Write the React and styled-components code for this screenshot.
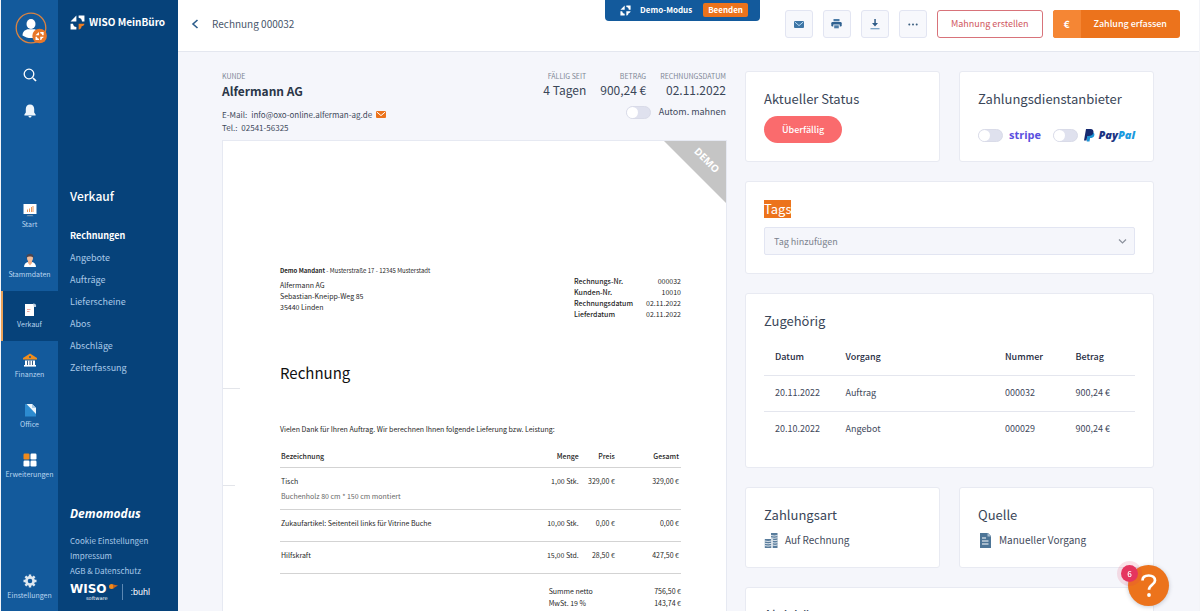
import React from "react";
import styled, { createGlobalStyle, css } from "styled-components";

const GlobalStyle = createGlobalStyle`
  *, *::before, *::after { box-sizing: border-box; }
  html, body { margin: 0; background: #fff; }
  body, button, input, select {
    font-family: "Noto Sans CJK SC", "Noto Sans", sans-serif;
  }
  body { font-size: 10px; line-height: 14px; color: #3f4a5c; }
  h1, h2, h3, p, ul, dl, dd { margin: 0; padding: 0; }
  ul { list-style: none; }
  a { color: inherit; text-decoration: none; }
  svg { display: block; flex: none; }
`;

/* ---------- shell ---------- */

const Shell = styled.div`
  display: grid;
  grid-template-columns: 57px 120px minmax(0, 1fr);
  grid-template-rows: minmax(0, 1fr);
  height: 100vh;
  overflow: hidden;
  border: solid #f3f4f8;
  border-width: 0 1px;
`;

const Rail = styled.nav`
  display: flex;
  flex-direction: column;
  align-items: stretch;
  background: #135a9c;
  color: #b9d6f0;
`;

const RailTop = styled.div`
  display: flex;
  flex-direction: column;
  align-items: center;
  gap: 22px;
  height: 191px;
  padding-top: 12px;
`;

const PlainButton = styled.button`
  display: block;
  padding: 0;
  border: 0;
  background: none;
  color: inherit;
  cursor: pointer;
`;

const RailLink = styled.a`
  display: flex;
  flex-direction: column;
  align-items: center;
  gap: 2px;
  height: 50px;
  padding-top: 12px;
  font-size: 7px;
  line-height: 10px;
  ${(p) =>
    p.$active &&
    css`
      background: #06427a;
      border-left: 2px solid #e9a25b;
      padding-right: 2px;
    `}
`;

const RailBottom = styled.div`
  margin-top: auto;
  padding-bottom: 5px;
  a { height: 44px; }
`;

const Sub = styled.aside`
  display: flex;
  flex-direction: column;
  padding: 13px 10px 11px 12px;
  background: #06427a;
  color: #a9c9e8;
`;

const Brand = styled.a`
  display: flex;
  align-items: center;
  gap: 4px;
  height: 18px;
  color: #fff;
  font-size: 10px;
  line-height: 18px;
  font-weight: 700;
  white-space: nowrap;
`;

const SubTitle = styled.h2`
  margin-top: 156px;
  font-size: 12px;
  line-height: 18px;
  font-weight: 500;
  color: #fff;
`;

const SubList = styled.ul`
  margin-top: 20px;
  font-size: 9px;
  line-height: 22px;
`;

const SubLink = styled.a`
  ${(p) => p.$active && "color: #fff; font-weight: 700;"}
`;

const SubFooter = styled.div`
  margin-top: auto;
`;

const DemoLabel = styled.p`
  margin-bottom: 10px;
  font: italic 700 12px/18px "Open Sans", sans-serif;
  color: #fff;
`;

const FooterList = styled.ul`
  font-size: 8px;
  line-height: 15px;
`;

const Logos = styled.div`
  display: flex;
  align-items: center;
  gap: 2px;
  margin-top: 6px;
  height: 16px;
  color: #fff;
`;

const WisoMark = styled.span`
  font: 700 12px/12px "DejaVu Sans", sans-serif;
  small {
    display: block;
    padding-left: 16px;
    font-size: 5px;
    line-height: 6px;
    font-weight: 400;
  }
`;

const Buhl = styled.span`
  margin-left: 2px;
  padding-left: 7px;
  border-left: 1px solid #5c88b3;
  font: 400 9px/16px "Liberation Sans", sans-serif;
`;

const Main = styled.main`
  display: flex;
  flex-direction: column;
  min-width: 0;
  background: #f5f6fb;
`;

/* ---------- header ---------- */

const Header = styled.header`
  position: relative;
  display: flex;
  flex: none;
  align-items: center;
  height: 52px;
  padding: 0 19px 3px 13px;
  background: #fff;
  border-bottom: 1px solid #e4e7ef;
`;

const PageTitle = styled.h1`
  margin-left: 12px;
  font-size: 10px;
  line-height: 16px;
  font-weight: 400;
  color: #48566b;
`;

const Actions = styled.div`
  display: flex;
  gap: 10px;
  margin-left: auto;
`;

const IconButton = styled.button`
  display: grid;
  place-items: center;
  width: 28px;
  height: 28px;
  padding: 0;
  border: 1px solid #e2e5f2;
  border-radius: 3px;
  background: #f7f8fc;
  color: #3c6c98;
`;

const OutlineButton = styled.button`
  height: 28px;
  padding: 0 13px;
  border: 1px solid #d8737a;
  border-radius: 3px;
  background: #fff;
  color: #cf565e;
  font-size: 9px;
  line-height: 14px;
`;

const PrimaryButton = styled.button`
  display: flex;
  height: 28px;
  padding: 0;
  overflow: hidden;
  border: 0;
  border-radius: 3px;
  background: #ec731c;
  color: #fff;
  font-size: 9px;
  line-height: 28px;
  font-weight: 500;
`;

const Euro = styled.span`
  width: 28px;
  background: #f58634;
  font-weight: 700;
  font-size: 10px;
`;

const ButtonText = styled.span`
  padding: 0 13px;
`;

const DemoBanner = styled.div`
  position: absolute;
  top: 0;
  right: 43%;
  display: flex;
  align-items: center;
  height: 21px;
  padding: 0 12px 1px 15px;
  border-radius: 0 0 4px 4px;
  background: #135a9c;
  color: #fff;
  font-size: 8px;
  font-weight: 700;
  white-space: nowrap;
`;

const DemoText = styled.span`
  margin: 0 11px 0 9px;
`;

const EndButton = styled.button`
  height: 14px;
  padding: 0 5px;
  border: 0;
  border-radius: 2px;
  background: #ec731c;
  color: #fff;
  font-size: 8px;
  line-height: 14px;
  font-weight: 700;
`;

/* ---------- content ---------- */

const Content = styled.div`
  display: grid;
  grid-template-columns: minmax(0, 1fr) 409px;
  gap: 18px;
  flex: 1;
  min-height: 0;
  overflow: hidden;
  padding: 19px 45px 0 44px;
`;

const Document = styled.section`
  display: flex;
  flex-direction: column;
  min-width: 0;
`;

const DocHead = styled.div`
  display: flex;
  justify-content: space-between;
  height: 69px;
  padding-right: 1px;
`;

const Label = styled.p`
  font-size: 7px;
  line-height: 10px;
  color: #7e8795;
  text-transform: uppercase;
`;

const CustomerName = styled.h2`
  font-size: 12px;
  line-height: 20px;
  font-weight: 700;
  color: #2b3648;
`;

const Contact = styled.div`
  margin-top: 7px;
  font-size: 8px;
  line-height: 13px;
  p { display: flex; align-items: center; gap: 4px; }
`;

const Stats = styled.div`
  display: flex;
  justify-content: flex-end;
  gap: 14px;
  text-align: right;
`;

const StatValue = styled.p`
  font-size: 12px;
  line-height: 18px;
  color: #3a4658;
`;

const RemindRow = styled.label`
  display: flex;
  align-items: center;
  justify-content: flex-end;
  gap: 8px;
  margin-top: 6px;
  font-size: 9px;
  line-height: 14px;
`;

const Toggle = styled.input.attrs({ type: "checkbox", role: "switch" })`
  appearance: none;
  flex: none;
  width: 25px;
  height: 13px;
  margin: 0;
  border: 1px solid #d9dbe8;
  border-radius: 7px;
  background: #dfe1ee;
  &::before {
    content: "";
    display: block;
    width: 11px;
    height: 11px;
    border-radius: 50%;
    background: #fff;
  }
  &:checked::before { margin-left: auto; }
`;

const Paper = styled.article`
  position: relative;
  flex: 1;
  padding: 124px 45px 0 57px;
  border: 1px solid #e6e9f2;
  border-bottom: 0;
  background: #fff;
  color: #1f1f1f;
  font-size: 7px;
  line-height: 11px;
`;

const Ribbon = styled.div`
  position: absolute;
  top: 0;
  right: 0;
  width: 62px;
  height: 62px;
  overflow: hidden;
  background: #c5c5c5;
  clip-path: polygon(0 0, 100% 0, 100% 100%);
  span {
    position: absolute;
    top: 12px;
    right: 4px;
    color: #fff;
    font: 700 10px/14px "Open Sans", sans-serif;
    transform: rotate(45deg);
  }
`;

const FoldMark = styled.i`
  position: absolute;
  left: 0;
  top: ${(p) => p.$top}px;
  width: ${(p) => p.$width}px;
  height: 1px;
  background: #e3e5ea;
`;

const AddressRow = styled.div`
  display: flex;
  justify-content: space-between;
`;

const Sender = styled.p`
  margin-bottom: 3px;
  font-size: 6px;
  line-height: 12px;
`;

const InvoiceInfo = styled.table`
  margin-top: 11px;
  border-collapse: collapse;
  th, td { padding: 0; line-height: 11px; }
  th { text-align: left; font-weight: 500; }
  td { text-align: right; padding-left: 13px; }
`;

const InvoiceTitle = styled.h2`
  margin-top: 41px;
  font-size: 15px;
  line-height: 24px;
  font-weight: 400;
  color: #111;
`;

const Intro = styled.p`
  margin-top: 39px;
`;

const Items = styled.table`
  width: 100%;
  margin-top: 8px;
  border-collapse: collapse;
  line-height: 11px;
  th, td {
    padding: 8px 2px 8px 1px;
    vertical-align: top;
    text-align: right;
    white-space: nowrap;
  }
  th { padding-bottom: 5px; font-weight: 500; }
  th:first-child, td:first-child { text-align: left; }
  th:nth-child(3), td:nth-child(3) { width: 9%; }
  th:last-child, td:last-child { width: 16%; }
  tr { border-bottom: 1px solid #d3d3d3; }
  tbody tr { height: 32px; }
  small { display: block; margin-top: 5px; font-size: 7px; line-height: 9px; color: #666; }
`;

const Totals = styled.dl`
  display: grid;
  grid-template-columns: auto auto;
  justify-content: space-between;
  width: 33%;
  margin: 11px 0 0 auto;
  line-height: 12px;
  dd { text-align: right; }
`;

/* ---------- cards ---------- */

const Cards = styled.section`
  display: grid;
  grid-template-columns: 1fr 1fr;
  align-content: start;
  gap: 19px;
`;

const Card = styled.section`
  grid-column: ${(p) => (p.$wide ? "1 / -1" : "auto")};
  min-height: ${(p) => p.$min}px;
  padding: 17px 18px;
  border: 1px solid #e8eaf2;
  border-radius: 3px;
  background: #fff;
`;

const CardTitle = styled.h3`
  font-size: 13px;
  line-height: 20px;
  font-weight: 400;
  color: #3a4658;
`;

const Marked = styled.mark`
  display: inline-block;
  background: #ec731c;
  color: #fff;
  line-height: 18px;
`;

const StatusPill = styled.span`
  display: inline-block;
  margin-top: 7px;
  padding: 0 18px;
  border-radius: 14px;
  background: #fa6b6d;
  color: #fff;
  font-size: 9px;
  line-height: 27px;
  font-weight: 500;
`;

const Providers = styled.div`
  display: flex;
  justify-content: space-between;
  margin-top: 18px;
`;

const Provider = styled.label`
  display: flex;
  align-items: center;
  gap: 6px;
  height: 16px;
`;

const StripeName = styled.span`
  font: 700 11px/16px "Open Sans", sans-serif;
  color: #5a4fe0;
`;

const PayPalName = styled.span`
  display: flex;
  align-items: center;
  gap: 3px;
  font: italic 800 11px/16px "Open Sans", sans-serif;
  color: #1b3382;
  em { color: #1a9ade; }
`;

const SelectWrap = styled.div`
  position: relative;
  margin-top: 8px;
  color: #8b919c;
  svg { position: absolute; right: 8px; top: 11px; pointer-events: none; }
`;

const TagSelect = styled.select`
  appearance: none;
  display: block;
  width: 100%;
  height: 28px;
  padding: 0 9px;
  border: 1px solid #e2e5f2;
  border-radius: 2px;
  background: #f5f6fb;
  color: #7b828e;
  font-size: 9px;
`;

const Related = styled.table`
  width: 100%;
  margin-top: 9px;
  border-collapse: collapse;
  table-layout: fixed;
  font-size: 9px;
  line-height: 14px;
  th, td { padding: 10px 0 11px 11px; text-align: left; font-weight: 400; white-space: nowrap; }
  th { font-weight: 500; color: #1f2c42; }
  tr + tr, tbody tr { border-top: 1px solid #e4e6ee; }
`;

const InfoLine = styled.p`
  display: flex;
  align-items: center;
  gap: 6px;
  margin-top: 7px;
  font-size: 10px;
  line-height: 16px;
`;

const HelpButton = styled.button`
  position: fixed;
  right: 31px;
  bottom: 5px;
  display: grid;
  place-items: center;
  width: 41px;
  height: 41px;
  padding: 0;
  border: 0;
  border-radius: 50%;
  background: #ec731c;
  box-shadow: 0 1px 4px rgba(40, 50, 80, 0.25);
`;

const Badge = styled.span`
  position: absolute;
  top: 0;
  left: -7px;
  width: 17px;
  height: 17px;
  border-radius: 50%;
  background: #e5355f;
  box-shadow: 0 0 0 4px rgba(229, 53, 95, 0.14);
  color: #fff;
  font-size: 8px;
  line-height: 17px;
  font-weight: 500;
`;

/* ---------- drawings ---------- */

const PinWheel = ({ size, accent = "#fff" }) => (
  <svg width={size} height={size} viewBox="0 0 16 16" aria-hidden="true">
    <path d="M6.800.6v6.200H.6z" fill="#fff" />
    <path d="M9.200.6h6.200v6.200h-2.600C12.600 4.600 11.400 3.300 9.200 3z" fill="#fff" />
    <path d="M.6 9.200h2.600c.3 2.200 1.500 3.400 3.600 3.700v2.500H.6z" fill="#fff" />
    <path d="M9.200 9.200h6.200c-.2 1.700-1.300 2.500-3 2.700-.2 1.900-1.200 3.200-3.200 3.500z" fill={accent} />
  </svg>
);

const Avatar = () => (
  <svg width="34" height="34" viewBox="0 0 34 34" aria-hidden="true">
    <circle cx="18" cy="16" r="14.800" fill="none" stroke="#d98341" strokeWidth="1.300" />
    <ellipse cx="18" cy="12" rx="4.500" ry="5" fill="#fff" />
    <path d="M9.500 23.500c0-4 3-6.200 6-6.200h5c3 0 6 2.200 6 6.200-5 3.400-12 3.400-17 0z" fill="#fff" />
    <circle cx="26.600" cy="24" r="7.300" fill="#e8772a" />
    <g transform="translate(22.200 19.600) scale(.55)" fill="#fff">
      <path d="M6.800.6v6.200H.6z" />
      <path d="M9.200.6h6.200v6.200h-2.600C12.600 4.600 11.400 3.300 9.200 3z" />
      <path d="M.6 9.200h2.600c.3 2.200 1.500 3.400 3.600 3.700v2.500H.6z" />
      <path d="M9.200 9.200h6.200c-.2 1.700-1.300 2.500-3 2.700-.2 1.900-1.200 3.200-3.200 3.500z" />
    </g>
  </svg>
);

const Search = () => (
  <svg width="14" height="14" viewBox="0 0 14 14" aria-hidden="true">
    <circle cx="6" cy="6" r="4.800" fill="none" stroke="#fff" strokeWidth="1.300" />
    <path d="M10 10l3 3" stroke="#fff" strokeWidth="1.700" />
  </svg>
);

const Bell = () => (
  <svg width="12" height="14" viewBox="0 0 12 14" aria-hidden="true">
    <path d="M6 .5c-2.700 0-4.200 2-4.200 4.500v3.500L.4 10.600v.9h11.200v-.9l-1.400-2.100V5C10.200 2.500 8.700.5 6 .5z" fill="#eef5fb" />
    <path d="M4.500 12h3c0 1-.7 1.600-1.500 1.600S4.500 13 4.500 12z" fill="#eef5fb" />
  </svg>
);

const railIcons = {
  start: (
    <>
      <path d="M.5 1h13v10H.5z" fill="#fff" />
      <path d="M4.500 12h5l1 1.300h-7z" fill="#6d8fae" />
      <path d="M4.500 9V6.500M6.500 9V5.500M8.500 9V4M10 9V3" stroke="#ec9a5c" strokeWidth="1" />
    </>
  ),
  people: (
    <>
      <path d="M1 14c0-3 2-4.500 4-5h4c2 .5 4 2 4 5z" fill="#fff" />
      <path d="M5 8h4v2l-2 2.500L5 10z" fill="#f0b08a" />
      <ellipse cx="7" cy="5" rx="3" ry="3.600" fill="#f3bd9a" />
      <path d="M3.500 5C3 2 5 .8 7 .8s4 1.200 3.500 4.200C10 3.500 8 3.500 7 3.500S4 3.500 3.500 5z" fill="#4a4550" />
    </>
  ),
  invoice: (
    <>
      <path d="M2 1h9v12H2z" fill="#fff" />
      <path d="M10 .5c2.500 0 3.500 1 3 3.500h-2z" fill="#b8cbdc" />
      <path d="M4 6.500h3.500M4 8.500h2.500" stroke="#efa8a0" />
    </>
  ),
  bank: (
    <>
      <path d="M7 .5L14 5v1.500H0V5z" fill="#ee8d1e" />
      <circle cx="7" cy="4" r="1" fill="#135a9c" />
      <path d="M2 7.500h10V12H2z" fill="#fff" />
      <path d="M4.500 7.500v4.500M7 7.500v4.500M9.500 7.500v4.500" stroke="#3c5f86" />
      <path d="M1 12h12v1.600H1z" fill="#fff" />
    </>
  ),
  office: (
    <>
      <path d="M2 1h7l4 4v8.500H2z" fill="#2d8bd0" />
      <path d="M3.500 1H9l4 4v6z" fill="#eef6fc" />
      <path d="M9 1v4h4z" fill="#a9cbe6" />
    </>
  ),
  grid: (
    <>
      <rect x=".5" y=".5" width="6" height="6" rx="1.200" fill="#f08a1c" />
      <rect x="7.500" y=".5" width="6" height="6" rx="1.200" fill="#fff" />
      <rect x=".5" y="7.500" width="6" height="6" rx="1.200" fill="#fff" />
      <rect x="7.500" y="7.500" width="6" height="6" rx="1.200" fill="#fff" />
    </>
  ),
  gear: (
    <>
      <circle cx="7" cy="7" r="3.600" fill="none" stroke="#dfe8f0" strokeWidth="2.600" />
      <path
        d="M7 .5v2.500M7 11v2.500M.5 7H3M11 7h2.500M2.400 2.400l1.800 1.800M9.800 9.800l1.800 1.800M2.400 11.600l1.800-1.800M9.800 4.200l1.800-1.800"
        stroke="#dfe8f0"
        strokeWidth="2.400"
      />
    </>
  ),
};

const RailIcon = ({ name }) => (
  <svg width="14" height="14" viewBox="0 0 14 14" aria-hidden="true">
    {railIcons[name]}
  </svg>
);

const Envelope = ({ width, height, fill, line }) => (
  <svg width={width} height={height} viewBox="0 0 10 7" aria-hidden="true">
    <rect width="10" height="7" rx="1" fill={fill} />
    <path d="M.8 1L5 4.600 9.200 1" fill="none" stroke={line} strokeWidth="1" />
  </svg>
);

const Printer = () => (
  <svg width="11" height="10" viewBox="0 0 11 10" aria-hidden="true">
    <path d="M2.500 0h6v2.300h-6z" fill="#4b7ba6" />
    <rect x=".3" y="3" width="10.400" height="4.500" rx="1.200" fill="#2f6190" />
    <path d="M2.300 5.500h6.400V10H2.300z" fill="#f7f8fc" />
    <path d="M3.200 6.300h4.600v3H3.200z" fill="#4b7ba6" />
  </svg>
);

const Download = () => (
  <svg width="10" height="11" viewBox="0 0 10 11" aria-hidden="true">
    <path d="M4.300 0h1.500v4H8L5 7.500 2 4h2.300z" fill="#2f5c88" />
    <path d="M.5 9.700h9" stroke="#6f9cc2" strokeWidth="1.200" />
  </svg>
);

const Dots = () => (
  <svg width="10" height="3" viewBox="0 0 10 3" aria-hidden="true">
    <circle cx="1.300" cy="1.500" r="1" fill="#3c5f80" />
    <circle cx="5" cy="1.500" r="1" fill="#3c5f80" />
    <circle cx="8.700" cy="1.500" r="1" fill="#3c5f80" />
  </svg>
);

const Chevron = ({ width, height, d, color, stroke }) => (
  <svg width={width} height={height} viewBox={`0 0 ${width} ${height}`} aria-hidden="true">
    <path d={d} fill="none" stroke={color} strokeWidth={stroke} />
  </svg>
);

const PayPalIcon = () => (
  <svg width="11" height="13" viewBox="0 0 11 13" aria-hidden="true">
    <path d="M3.500 3h5c2 .7 2.300 2.500 1.600 4-.7 1.600-2 2-4 2l-.6 3.600H2.700z" fill="#1d94d6" />
    <path d="M2 0h4.500C9 0 10 1.800 9.300 4 8.600 6.200 7 7 4.500 7H3.300l-.8 4.500H0z" fill="#15296f" />
  </svg>
);

const Coins = () => (
  <svg width="15" height="15" viewBox="0 0 15 15" aria-hidden="true">
    <path
      d="M7 0h6.500v15H8.500V5.500H7z"
      fill="#587c9c"
    />
    <path d="M.8 6h6.700v9H.8z" fill="#587c9c" />
    <path
      d="M7 2.500q3.200 1 6.500 0M7 4.800q3.200 1 6.500 0M8.500 7.200q2.500.9 5 0M8.500 9.600q2.500.9 5 0M8.500 12q2.500.9 5 0M.8 8q3.300 1 6.700 0M.8 10.300q3.300 1 6.700 0M.8 12.600q3.300 1 6.700 0M8 5.500V15"
      fill="none"
      stroke="#fff"
      strokeWidth=".8"
    />
  </svg>
);

const DocIcon = () => (
  <svg width="15" height="15" viewBox="0 0 15 15" aria-hidden="true">
    <path d="M2 0h8l3 3v12H2z" fill="#4d7597" />
    <path d="M9.500 0v3.500H13z" fill="#a9bfd2" />
    <path d="M4 5h4M4 8h6.500M4 11h6.500" stroke="#fff" strokeWidth="1.200" />
  </svg>
);

const WisoSpark = () => (
  <svg width="9" height="18" viewBox="0 0 9 18" aria-hidden="true">
    <circle cx="2.500" cy="3.500" r="2.500" fill="#f08a1c" />
    <path d="M4 1.500l5 1-5 3z" fill="#c9651c" />
  </svg>
);

const QuestionMark = () => (
  <svg width="18" height="25" viewBox="0 0 18 25" aria-hidden="true">
    <path
      d="M2.500 7.500C2.500 4 5.500 2.500 8.800 2.500c3.700 0 6.200 2 6.200 5 0 4.200-6 4.500-6 9.300"
      fill="none"
      stroke="#fff"
      strokeWidth="2.700"
    />
    <circle cx="9" cy="22" r="1.900" fill="#fff" />
  </svg>
);

/* ---------- data ---------- */

const railItems = [
  ["start", "Start"],
  ["people", "Stammdaten"],
  ["invoice", "Verkauf"],
  ["bank", "Finanzen"],
  ["office", "Office"],
  ["grid", "Erweiterungen"],
];

const subItems = ["Rechnungen", "Angebote", "Aufträge", "Lieferscheine", "Abos", "Abschläge", "Zeiterfassung"];
const footerItems = ["Cookie Einstellungen", "Impressum", "AGB & Datenschutz"];

const stats = [
  ["Fällig seit", "4 Tagen"],
  ["Betrag", "900,24 €"],
  ["Rechnungsdatum", "02.11.2022"],
];

const invoiceInfo = [
  ["Rechnungs-Nr.", "000032"],
  ["Kunden-Nr.", "10010"],
  ["Rechnungsdatum", "02.11.2022"],
  ["Lieferdatum", "02.11.2022"],
];

const positions = [
  { name: "Tisch", note: "Buchenholz 80 cm * 150 cm montiert", amount: "1,00 Stk.", price: "329,00 €", total: "329,00 €" },
  { name: "Zukaufartikel: Seitenteil links für Vitrine Buche", amount: "10,00 Stk.", price: "0,00 €", total: "0,00 €" },
  { name: "Hilfskraft", amount: "15,00 Std.", price: "28,50 €", total: "427,50 €" },
];

const related = [
  ["20.11.2022", "Auftrag", "000032", "900,24 €"],
  ["20.10.2022", "Angebot", "000029", "900,24 €"],
];

/* ---------- page ---------- */

export default function App() {
  return (
    <>
      <GlobalStyle />
      <Shell>
        <Rail aria-label="Hauptnavigation">
          <RailTop>
            <PlainButton aria-label="Profil"><Avatar /></PlainButton>
            <PlainButton aria-label="Suche"><Search /></PlainButton>
            <PlainButton aria-label="Benachrichtigungen"><Bell /></PlainButton>
          </RailTop>
          {railItems.map(([icon, label]) => (
            <RailLink key={label} href="#" $active={label === "Verkauf"}>
              <RailIcon name={icon} />
              {label}
            </RailLink>
          ))}
          <RailBottom>
            <RailLink href="#">
              <RailIcon name="gear" />
              Einstellungen
            </RailLink>
          </RailBottom>
        </Rail>

        <Sub>
          <Brand href="#">
            <PinWheel size={15} accent="#ee7d22" />
            WISO MeinBüro
          </Brand>
          <SubTitle>Verkauf</SubTitle>
          <SubList>
            {subItems.map((item, i) => (
              <li key={item}><SubLink href="#" $active={i === 0}>{item}</SubLink></li>
            ))}
          </SubList>
          <SubFooter>
            <DemoLabel>Demomodus</DemoLabel>
            <FooterList>
              {footerItems.map((item) => (
                <li key={item}><a href="#">{item}</a></li>
              ))}
            </FooterList>
            <Logos>
              <WisoMark>WISO<small>software</small></WisoMark>
              <WisoSpark />
              <Buhl>:buhl</Buhl>
            </Logos>
          </SubFooter>
        </Sub>

        <Main>
          <Header>
            <PlainButton aria-label="Zurück">
              <Chevron width={9} height={10} d="M6.500 1L2 5l4.500 4" color="#2c5d8c" stroke="1.600" />
            </PlainButton>
            <PageTitle>Rechnung 000032</PageTitle>
            <DemoBanner>
              <PinWheel size={11} />
              <DemoText>Demo-Modus</DemoText>
              <EndButton>Beenden</EndButton>
            </DemoBanner>
            <Actions>
              <IconButton aria-label="E-Mail senden"><Envelope width={10} height={7} fill="#3f76a6" line="#b9dcf5" /></IconButton>
              <IconButton aria-label="Drucken"><Printer /></IconButton>
              <IconButton aria-label="Herunterladen"><Download /></IconButton>
              <IconButton aria-label="Mehr"><Dots /></IconButton>
              <OutlineButton>Mahnung erstellen</OutlineButton>
              <PrimaryButton>
                <Euro>€</Euro>
                <ButtonText>Zahlung erfassen</ButtonText>
              </PrimaryButton>
            </Actions>
          </Header>

          <Content>
            <Document>
              <DocHead>
                <div>
                  <Label>Kunde</Label>
                  <CustomerName>Alfermann AG</CustomerName>
                  <Contact>
                    <p>
                      <span>E-Mail:</span>
                      <a href="#">info@oxo-online.alferman-ag.de</a>
                      <Envelope width={10} height={7} fill="#ec731c" line="#fff" />
                    </p>
                    <p><span>Tel.:</span><span>02541-56325</span></p>
                  </Contact>
                </div>
                <div>
                  <Stats>
                    {stats.map(([label, value]) => (
                      <div key={label}>
                        <Label>{label}</Label>
                        <StatValue>{value}</StatValue>
                      </div>
                    ))}
                  </Stats>
                  <RemindRow>
                    <Toggle />
                    Autom. mahnen
                  </RemindRow>
                </div>
              </DocHead>

              <Paper>
                <Ribbon><span>DEMO</span></Ribbon>
                <FoldMark $top={247} $width={17} />
                <FoldMark $top={344} $width={12} />
                <AddressRow>
                  <div>
                    <Sender><b>Demo Mandant</b> - Musterstraße 17 - 12345 Musterstadt</Sender>
                    <p>Alfermann AG<br />Sebastian-Kneipp-Weg 85<br />35440 Linden</p>
                  </div>
                  <InvoiceInfo>
                    <tbody>
                      {invoiceInfo.map(([label, value]) => (
                        <tr key={label}><th scope="row">{label}</th><td>{value}</td></tr>
                      ))}
                    </tbody>
                  </InvoiceInfo>
                </AddressRow>
                <InvoiceTitle>Rechnung</InvoiceTitle>
                <Intro>Vielen Dank für Ihren Auftrag. Wir berechnen Ihnen folgende Lieferung bzw. Leistung:</Intro>
                <Items>
                  <thead>
                    <tr><th>Bezeichnung</th><th>Menge</th><th>Preis</th><th>Gesamt</th></tr>
                  </thead>
                  <tbody>
                    {positions.map((p) => (
                      <tr key={p.name}>
                        <td>{p.name}{p.note && <small>{p.note}</small>}</td>
                        <td>{p.amount}</td>
                        <td>{p.price}</td>
                        <td>{p.total}</td>
                      </tr>
                    ))}
                  </tbody>
                </Items>
                <Totals>
                  <dt>Summe netto</dt><dd>756,50 €</dd>
                  <dt>MwSt. 19 %</dt><dd>143,74 €</dd>
                </Totals>
              </Paper>
            </Document>

            <Cards>
              <Card $min={91}>
                <CardTitle>Aktueller Status</CardTitle>
                <StatusPill>Überfällig</StatusPill>
              </Card>
              <Card $min={91}>
                <CardTitle>Zahlungsdienstanbieter</CardTitle>
                <Providers>
                  <Provider>
                    <Toggle />
                    <StripeName>stripe</StripeName>
                  </Provider>
                  <Provider>
                    <Toggle />
                    <PayPalName><PayPalIcon /><span>Pay<em>Pal</em></span></PayPalName>
                  </Provider>
                </Providers>
              </Card>
              <Card $wide $min={93}>
                <CardTitle id="tags-title"><Marked>Tags</Marked></CardTitle>
                <SelectWrap>
                  <TagSelect aria-labelledby="tags-title" defaultValue="">
                    <option value="">Tag hinzufügen</option>
                  </TagSelect>
                  <Chevron width={9} height={7} d="M1 1.500l3.500 3.500L8 1.500" color="#8b919c" stroke="1.200" />
                </SelectWrap>
              </Card>
              <Card $wide $min={175}>
                <CardTitle>Zugehörig</CardTitle>
                <Related>
                  <colgroup>
                    <col width="19%" /><col width="43%" /><col width="19%" /><col width="19%" />
                  </colgroup>
                  <thead>
                    <tr><th>Datum</th><th>Vorgang</th><th>Nummer</th><th>Betrag</th></tr>
                  </thead>
                  <tbody>
                    {related.map((row) => (
                      <tr key={row[0]}>{row.map((cell) => <td key={cell}>{cell}</td>)}</tr>
                    ))}
                  </tbody>
                </Related>
              </Card>
              <Card $min={81}>
                <CardTitle>Zahlungsart</CardTitle>
                <InfoLine><Coins />Auf Rechnung</InfoLine>
              </Card>
              <Card $min={81}>
                <CardTitle>Quelle</CardTitle>
                <InfoLine><DocIcon />Manueller Vorgang</InfoLine>
              </Card>
              <Card $wide $min={92}>
                <CardTitle>Aktivitäten</CardTitle>
              </Card>
            </Cards>
          </Content>
        </Main>
      </Shell>
      <HelpButton aria-label="Hilfe, 6 neue Nachrichten">
        <QuestionMark />
        <Badge>6</Badge>
      </HelpButton>
    </>
  );
}
